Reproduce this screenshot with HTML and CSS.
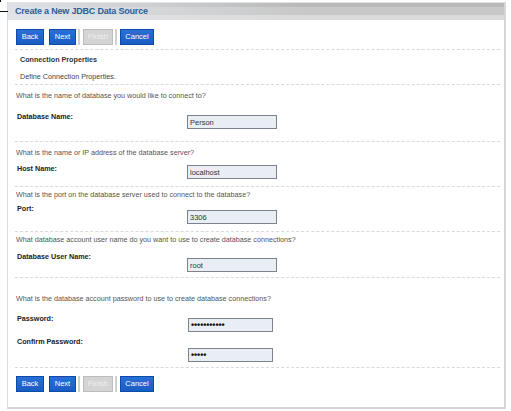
FILE: index.html
```html
<!DOCTYPE html>
<html>
<head>
<meta charset="utf-8">
<title>Create a New JDBC Data Source</title>
<link rel="stylesheet" href="styles.css">
</head>
<body>
<div class="panel">
  <div class="header"><h1 class="title">Create a New JDBC Data Source</h1></div>
  <div class="content">
    <div class="toolbar">
      <button class="btn">Back</button>
      <button class="btn btn-next">Next</button>
      <span class="sep"></span>
      <button class="btn btn-disabled">Finish</button>
      <span class="sep"></span>
      <button class="btn btn-cancel">Cancel</button>
    </div>
    <div class="intro">
      <div class="intro-title">Connection Properties</div>
      <div class="intro-desc">Define Connection Properties.</div>
    </div>
    <div class="section s1">
      <div class="question">What is the name of database you would like to connect to?</div>
      <div class="field f1"><span class="label">Database Name:</span><input class="input" type="text" value="Person" readonly></div>
    </div>
    <div class="section s2">
      <div class="question">What is the name or IP address of the database server?</div>
      <div class="field f2"><span class="label">Host Name:</span><input class="input" type="text" value="localhost" readonly></div>
    </div>
    <div class="section s3">
      <div class="question">What is the port on the database server used to connect to the database?</div>
      <div class="field f3"><span class="label">Port:</span><input class="input" type="text" value="3306" readonly></div>
    </div>
    <div class="section s4">
      <div class="question">What database account user name do you want to use to create database connections?</div>
      <div class="field f4"><span class="label">Database User Name:</span><input class="input" type="text" value="root" readonly></div>
    </div>
    <div class="section s5">
      <div class="question">What is the database account password to use to create database connections?</div>
      <div class="field f5"><span class="label">Password:</span><span class="input input-pw">•••••••••••</span></div>
      <div class="field f6"><span class="label">Confirm Password:</span><span class="input input-pw">•••••</span></div>
    </div>
    <div class="toolbar toolbar-bottom">
      <button class="btn">Back</button>
      <button class="btn btn-next">Next</button>
      <span class="sep"></span>
      <button class="btn btn-disabled">Finish</button>
      <span class="sep"></span>
      <button class="btn btn-cancel">Cancel</button>
    </div>
  </div>
</div>
</body>
</html>
```
FILE: styles.css
```css
html, body {
  margin: 0;
  padding: 0;
  background: #ffffff;
}
body {
  position: relative;
  width: 511px;
  height: 411px;
  overflow: hidden;
  font-family: "Liberation Sans", Arial, sans-serif;
}
body::before {
  content: "";
  position: absolute;
  left: 0;
  top: 11px;
  width: 8px;
  height: 1px;
  background: #111;
}
body::after {
  content: "";
  position: absolute;
  left: 0;
  top: 0;
  width: 1px;
  height: 2px;
  background: #111;
}
.panel {
  margin: 2px 0 0 7px;
  width: 496px;
  height: 405px;
  border-left: 1px solid #dcdcdc;
  border-right: 2px solid #d6d6d6;
  border-bottom: 2px solid #d6d6d6;
  display: flex;
  flex-direction: column;
}
.header {
  height: 18px;
  padding-left: 7px;
  background:
    linear-gradient(to right, rgba(226,230,235,0.9) 0%, rgba(226,230,235,0.4) 35%, rgba(226,230,235,0) 60%),
    linear-gradient(#e2e2e2 0, #e2e2e2 1px, #b8b8b8 1px, #b8b8b8 5px, #c8c8c8 5px, #c8c8c8 13px, #dadada 13px, #dadada 18px);
}
.title {
  margin: 0;
  font-size: 9px;
  line-height: 18px;
  font-weight: bold;
  color: #2f5f96;
  letter-spacing: -0.2px;
}
.content {
  padding: 0 4px 0 7px;
}
.toolbar {
  display: flex;
  align-items: center;
  padding: 9px 0 4px 1px;
  border-bottom: 1px dashed #dadada;
}
.toolbar-bottom {
  border-bottom: none;
  padding-top: 8px;
}
.btn {
  height: 16px;
  width: 28px;
  margin: 0;
  padding: 0;
  border: 1px solid #0f4aa8;
  background: linear-gradient(#2a6fd6, #1a5cc4);
  color: #ffffff;
  font-family: "Liberation Sans", Arial, sans-serif;
  font-size: 7.5px;
  line-height: 14px;
  text-align: center;
}
.btn-next {
  width: 27px;
  margin-left: 5px;
}
.btn-disabled {
  width: 30px;
  background: #d4d4d4;
  border-color: #bdbdbd;
  color: #f0f0f0;
}
.btn-cancel {
  width: 34px;
}
.sep {
  width: 2px;
  height: 16px;
  margin: 0 3px 0 2px;
  background: #d0d0d0;
}
.intro {
  padding: 4px 0 1px 5px;
  border-bottom: 1px dashed #dadada;
}
.intro-title {
  font-size: 7.2px;
  line-height: 12px;
  font-weight: bold;
  color: #333333;
}
.intro-desc {
  margin-top: 5px;
  font-size: 7.2px;
  line-height: 12px;
  color: #444444;
}
.section {
  border-bottom: 1px dashed #dadada;
}
.question {
  padding-left: 1px;
  font-size: 7.2px;
  line-height: 12px;
  color: #555555;
}
.field {
  display: flex;
  align-items: flex-start;
}
.label {
  width: 170px;
  padding-left: 2px;
  flex: none;
  font-size: 7.2px;
  line-height: 12px;
  font-weight: bold;
  color: #222222;
}
.input {
  box-sizing: border-box;
  width: 90px;
  height: 14px;
  margin: 0;
  padding: 0 0 0 2px;
  border: 1px solid #7c838b;
  background: #e8eef3;
  color: #333333;
  font-family: "Liberation Sans", Arial, sans-serif;
  font-size: 7.5px;
  outline: none;
}
.input-pw {
  display: block;
  width: 85px;
  margin-left: 1px;
  padding-left: 2px;
  font-size: 9px;
  font-weight: bold;
  line-height: 12px;
  letter-spacing: -0.1px;
  color: #111111;
  overflow: hidden;
  white-space: nowrap;
}
.s1 { padding: 5px 0 12px; }
.f1 { margin-top: 9px; }
.f1 .input { margin-top: 4px; }
.s2 { padding: 5px 0 7px; }
.f2 { margin-top: 4px; }
.f2 .input { margin-top: 2px; }
.s3 { padding: 2px 0 7px; }
.f3 { margin-top: 2px; }
.f3 .input { margin-top: 7px; }
.s4 { padding: 2px 0 5px; }
.f4 { margin-top: 5px; }
.f4 .input { margin-top: 7px; }
.s5 { padding: 15px 0 5px; }
.f5 { margin-top: 8px; }
.f5 .input { margin-top: 5px; }
.f6 { margin-top: 4px; }
.f6 .input { margin-top: 12px; }
```
